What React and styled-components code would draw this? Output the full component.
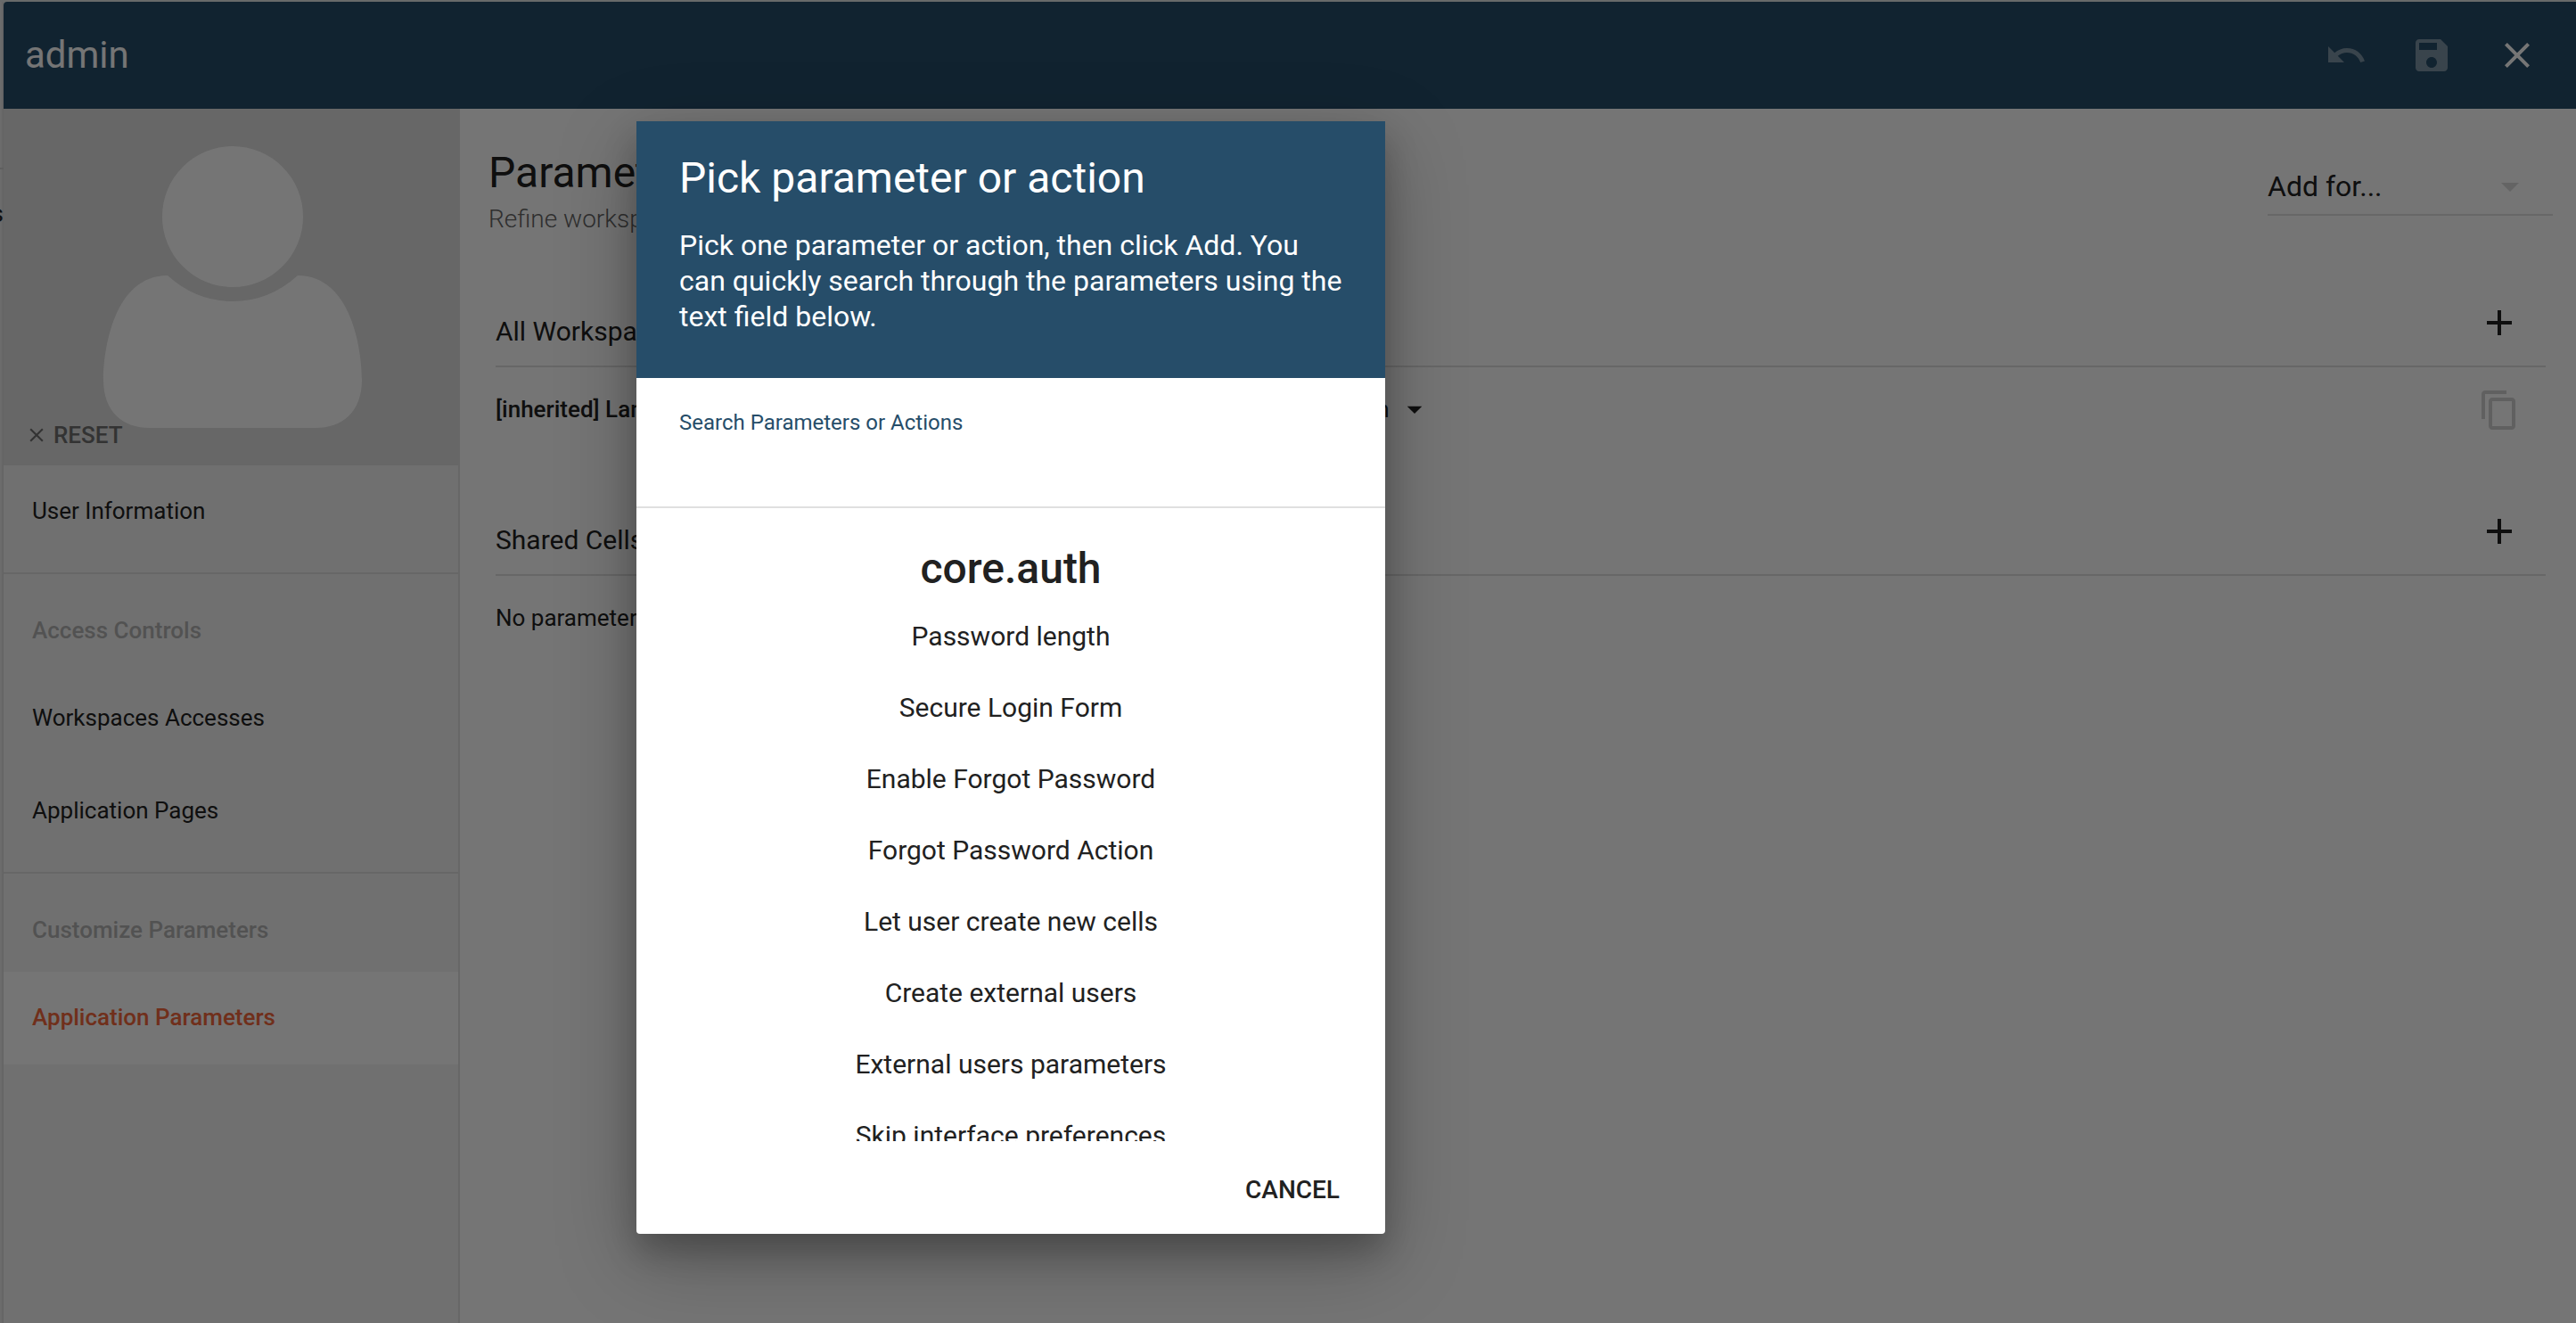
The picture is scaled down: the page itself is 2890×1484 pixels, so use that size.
import React from "react";
import styled, { createGlobalStyle } from "styled-components";

const Global = createGlobalStyle`
  *, *::before, *::after { box-sizing: border-box; }
  html, body, #root { height: 100%; }
  body {
    margin: 0;
    overflow: hidden;
    background: #f7f7f7;
    color: #212121;
    font-family: Roboto, "Liberation Sans", sans-serif;
    font-size: 26px;
  }
  button, input, select { font: inherit; color: inherit; }
  h1, h2, h3, p, ul { margin: 0; padding: 0; font-weight: 400; }
`;

const Page = styled.div`
  position: relative;
  height: 100%;
  padding: 2px 0 0 4px;
  background: #e2e6e8;
`;

const Behind = styled.div`
  position: absolute;
  top: 2px;
  left: 0;
  bottom: 0;
  width: 4px;
  overflow: hidden;
  background: linear-gradient(to right, #eeeeee, #d8d8d8);
  display: flex;
  flex-direction: column;
  align-items: flex-end;
  padding-top: 186px;
`;

const BehindLabel = styled.span`
  width: 100%;
  border-top: 2px solid #d0d0d0;
  padding-top: 34px;
  font-size: 28px;
  line-height: 32px;
  display: flex;
  justify-content: flex-end;
`;

const Editor = styled.div`
  position: relative;
  display: flex;
  flex-direction: column;
  height: 100%;
  background: #ffffff;
  border-top-left-radius: 4px;
  overflow: hidden;
`;

const AppBar = styled.header`
  flex: none;
  display: flex;
  align-items: center;
  justify-content: space-between;
  height: 120px;
  padding: 0 18px 0 24px;
  background: #264d69;
  color: #ffffff;
`;

const AppTitle = styled.h1`
  font-size: 42px;
  line-height: 52px;
`;

const Actions = styled.div`
  display: flex;
`;

const IconButton = styled.button`
  display: flex;
  align-items: center;
  justify-content: center;
  width: ${(p) => (p.$compact ? 48 : 96)}px;
  height: ${(p) => (p.$compact ? 48 : 96)}px;
  padding: 0;
  border: 0;
  background: none;
  color: inherit;
  opacity: ${(p) => (p.$dim ? p.$dim : 1)};
`;

const Icon = styled.svg`
  display: block;
  flex: none;
  width: ${(p) => p.$size || 48}px;
  height: ${(p) => p.$size || 48}px;
  fill: currentColor;
`;

const Body = styled.div`
  flex: 1;
  min-height: 0;
  display: flex;
`;

const Sidebar = styled.nav`
  flex: none;
  width: 512px;
  background: #f5f5f5;
  border-right: 2px solid #e0e0e0;
`;

const AvatarBox = styled.div`
  position: relative;
  height: 400px;
  background: #e0e0e0;
`;

const AvatarDrawing = styled.svg`
  display: block;
  width: 100%;
  height: 100%;
`;

const ResetButton = styled.button`
  position: absolute;
  left: 24px;
  bottom: 18px;
  display: flex;
  align-items: center;
  gap: 6px;
  padding: 0;
  border: 0;
  background: none;
  color: #707070;
  font-size: 26px;
  font-weight: 500;
  line-height: 32px;
`;

const Section = styled.div`
  padding: ${(p) => (p.$first ? "0 0 16px" : "16px 0")};
  & + & { border-top: 2px solid #e0e0e0; }
`;

const SectionLabel = styled.h3`
  padding: 0 32px;
  line-height: 94px;
  font-size: 26px;
  font-weight: 500;
  color: #b4b4b4;
`;

const NavItem = styled.a`
  display: block;
  padding: 0 32px 2px;
  line-height: 102px;
  font-size: 26px;
  font-weight: ${(p) => (p.$active ? 500 : 400)};
  color: ${(p) => (p.$active ? "#f4683c" : "#212121")};
  background: ${(p) => (p.$active ? "#ffffff" : "transparent")};
  text-decoration: none;
`;

const Main = styled.main`
  flex: 1;
  min-width: 0;
  padding: 36px 26px 0 32px;
`;

const MainHead = styled.div`
  display: flex;
  justify-content: space-between;
  height: 164px;
`;

const Heading = styled.h2`
  font-size: 48px;
  line-height: 72px;
`;

const SubHeading = styled.p`
  font-size: 28px;
  line-height: 32px;
  font-weight: 300;
  color: #666666;
`;

const AddFor = styled.label`
  display: flex;
  align-items: center;
  align-self: flex-start;
  width: 320px;
  height: 64px;
  margin-top: 20px;
  padding-right: 24px;
  border-bottom: 2px solid #e0e0e0;
  color: #dadada;
`;

const AddSelect = styled.select`
  flex: 1;
  appearance: none;
  border: 0;
  padding: 0;
  background: none;
  color: #212121;
  font-size: 32px;
  line-height: 40px;
`;

const Group = styled.section`
  height: 234px;
  padding: 0 8px;
`;

const GroupHead = styled.div`
  display: flex;
  align-items: flex-start;
  justify-content: space-between;
  height: 90px;
  padding: 16px 28px 0 0;
  border-bottom: 2px solid #e0e0e0;
`;

const GroupTitle = styled.h3`
  padding-top: 16px;
  font-size: 30px;
  line-height: 36px;
`;

const ParamRow = styled.div`
  display: flex;
  align-items: center;
  height: 96px;
  padding-right: 4px;
`;

const ParamName = styled.span`
  flex: 0 0 40%;
  padding-bottom: 2px;
  font-weight: 500;
`;

const ParamValue = styled.label`
  flex: 1;
  display: flex;
  align-items: center;
  gap: 8px;
  padding-bottom: 2px;
`;

const ValueSelect = styled.select`
  appearance: none;
  border: 0;
  padding: 0;
  background: none;
`;

const Empty = styled.p`
  line-height: 94px;
`;

const Overlay = styled.div`
  position: absolute;
  inset: 0;
  display: flex;
  align-items: flex-start;
  padding: 136px 0 0 714px;
  background: rgba(0, 0, 0, 0.54);
`;

const Dialog = styled.div`
  width: 840px;
  border-radius: 4px;
  background: #ffffff;
  box-shadow: 0 28px 90px rgba(0, 0, 0, 0.25), 0 20px 36px rgba(0, 0, 0, 0.22);
`;

const DialogHead = styled.div`
  padding: 36px 48px 49px;
  background: #264d69;
  color: #ffffff;
`;

const DialogTitle = styled.h2`
  font-size: 48px;
  line-height: 56px;
`;

const DialogText = styled.p`
  padding-top: 27px;
  font-size: 32px;
  line-height: 40px;
`;

const SearchField = styled.label`
  display: flex;
  flex-direction: column;
  height: 146px;
  padding: 34px 48px 0;
  border-bottom: 2px solid #e0e0e0;
  color: #264d69;
  font-size: 24px;
  line-height: 32px;
`;

const SearchInput = styled.input`
  height: 64px;
  padding: 0;
  border: 0;
  outline: 0;
  background: none;
  font-size: 32px;
`;

const Results = styled.div`
  height: 710px;
  padding-top: 32px;
  overflow: hidden;
  text-align: center;
`;

const ResultsTitle = styled.h3`
  font-size: 48px;
  line-height: 72px;
  font-weight: 500;
`;

const ResultItem = styled.button`
  display: block;
  width: 100%;
  height: 80px;
  padding: 0;
  border: 0;
  background: none;
  font-size: 30px;
  line-height: 80px;
`;

const DialogActions = styled.div`
  display: flex;
  justify-content: flex-end;
  padding: 18px 16px 14px;
`;

const CancelButton = styled.button`
  height: 72px;
  padding: 0 35px;
  border: 0;
  background: none;
  font-size: 28px;
  font-weight: 500;
`;

const PATHS = {
  undo: "M12.5 8c-2.65 0-5.05.99-6.9 2.6L2 7v9h9l-3.62-3.62c1.39-1.16 3.16-1.88 5.12-1.88 3.54 0 6.55 2.31 7.6 5.5l2.37-.78C21.08 11.03 17.15 8 12.5 8z",
  save: "M17 3H5c-1.11 0-2 .9-2 2v14c0 1.1.89 2 2 2h14c1.1 0 2-.9 2-2V7l-4-4zm-5 16c-1.66 0-3-1.34-3-3s1.34-3 3-3 3 1.34 3 3-1.34 3-3 3zm3-10H5V5h10v4z",
  close: "M19 6.41L17.59 5 12 10.59 6.41 5 5 6.41 10.59 12 5 17.59 6.41 19 12 13.41 17.59 19 19 17.59 13.41 12z",
  plus: "M19 13h-6v6h-2v-6H5v-2h6V5h2v6h6v2z",
  copy: "M16 1H4c-1.1 0-2 .9-2 2v14h2V3h12V1zm3 4H8c-1.1 0-2 .9-2 2v14c0 1.1.9 2 2 2h11c1.1 0 2-.9 2-2V7c0-1.1-.9-2-2-2zm0 16H8V7h11v14z",
  caret: "M7 10l5 5 5-5z",
};

function Glyph({ name, size }) {
  return (
    <Icon $size={size} viewBox="0 0 24 24" aria-hidden="true">
      <path d={PATHS[name]} />
    </Icon>
  );
}

const RESULTS = [
  "Password length",
  "Secure Login Form",
  "Enable Forgot Password",
  "Forgot Password Action",
  "Let user create new cells",
  "Create external users",
  "External users parameters",
  "Skip interface preferences",
];

export default function App() {
  return (
    <Page>
      <Global />
      <Behind aria-hidden="true">
        <BehindLabel>s</BehindLabel>
      </Behind>
      <Editor>
        <AppBar>
          <AppTitle>admin</AppTitle>
          <Actions>
            <IconButton $dim={0.4} aria-label="Revert"><Glyph name="undo" /></IconButton>
            <IconButton $dim={0.4} aria-label="Save"><Glyph name="save" /></IconButton>
            <IconButton aria-label="Close"><Glyph name="close" /></IconButton>
          </Actions>
        </AppBar>
        <Body>
          <Sidebar>
            <AvatarBox>
              <AvatarDrawing viewBox="0 0 510 400" aria-hidden="true">
                <circle cx="257" cy="121" r="79" fill="#ffffff" />
                <path
                  d="M184 187Q216 216 257 216T330 187C390 187 402 270 402 304C402 340 380 358 350 358H164C134 358 112 340 112 304C112 270 124 187 184 187Z"
                  fill="#ffffff"
                />
              </AvatarDrawing>
              <ResetButton><Glyph name="close" size={26} />RESET</ResetButton>
            </AvatarBox>
            <Section $first>
              <NavItem href="#user">User Information</NavItem>
            </Section>
            <Section>
              <SectionLabel>Access Controls</SectionLabel>
              <NavItem href="#workspaces">Workspaces Accesses</NavItem>
              <NavItem href="#pages">Application Pages</NavItem>
            </Section>
            <Section>
              <SectionLabel>Customize Parameters</SectionLabel>
              <NavItem href="#parameters" $active>Application Parameters</NavItem>
            </Section>
          </Sidebar>
          <Main>
            <MainHead>
              <div>
                <Heading>Parameters</Heading>
                <SubHeading>Refine workspaces parameters</SubHeading>
              </div>
              <AddFor>
                <AddSelect aria-label="Add for"><option>Add for...</option></AddSelect>
                <Glyph name="caret" />
              </AddFor>
            </MainHead>
            <Group>
              <GroupHead>
                <GroupTitle>All Workspaces</GroupTitle>
                <IconButton $compact aria-label="Add to all workspaces"><Glyph name="plus" /></IconButton>
              </GroupHead>
              <ParamRow>
                <ParamName>[inherited] Language</ParamName>
                <ParamValue>
                  <ValueSelect aria-label="Language"><option>English</option></ValueSelect>
                  <Glyph name="caret" size={40} />
                </ParamValue>
                <IconButton $dim={0.2} aria-label="Copy"><Glyph name="copy" /></IconButton>
              </ParamRow>
            </Group>
            <Group>
              <GroupHead>
                <GroupTitle>Shared Cells</GroupTitle>
                <IconButton $compact aria-label="Add to shared cells"><Glyph name="plus" /></IconButton>
              </GroupHead>
              <Empty>No parameters</Empty>
            </Group>
          </Main>
        </Body>
      </Editor>
      <Overlay>
        <Dialog role="dialog" aria-labelledby="dialog-title">
          <DialogHead>
            <DialogTitle id="dialog-title">Pick parameter or action</DialogTitle>
            <DialogText>
              Pick one parameter or action, then click Add. You can quickly search through the parameters using the text field below.
            </DialogText>
          </DialogHead>
          <SearchField>
            Search Parameters or Actions
            <SearchInput type="text" />
          </SearchField>
          <Results>
            <ResultsTitle>core.auth</ResultsTitle>
            {RESULTS.map((r) => <ResultItem key={r}>{r}</ResultItem>)}
          </Results>
          <DialogActions>
            <CancelButton>CANCEL</CancelButton>
          </DialogActions>
        </Dialog>
      </Overlay>
    </Page>
  );
}
